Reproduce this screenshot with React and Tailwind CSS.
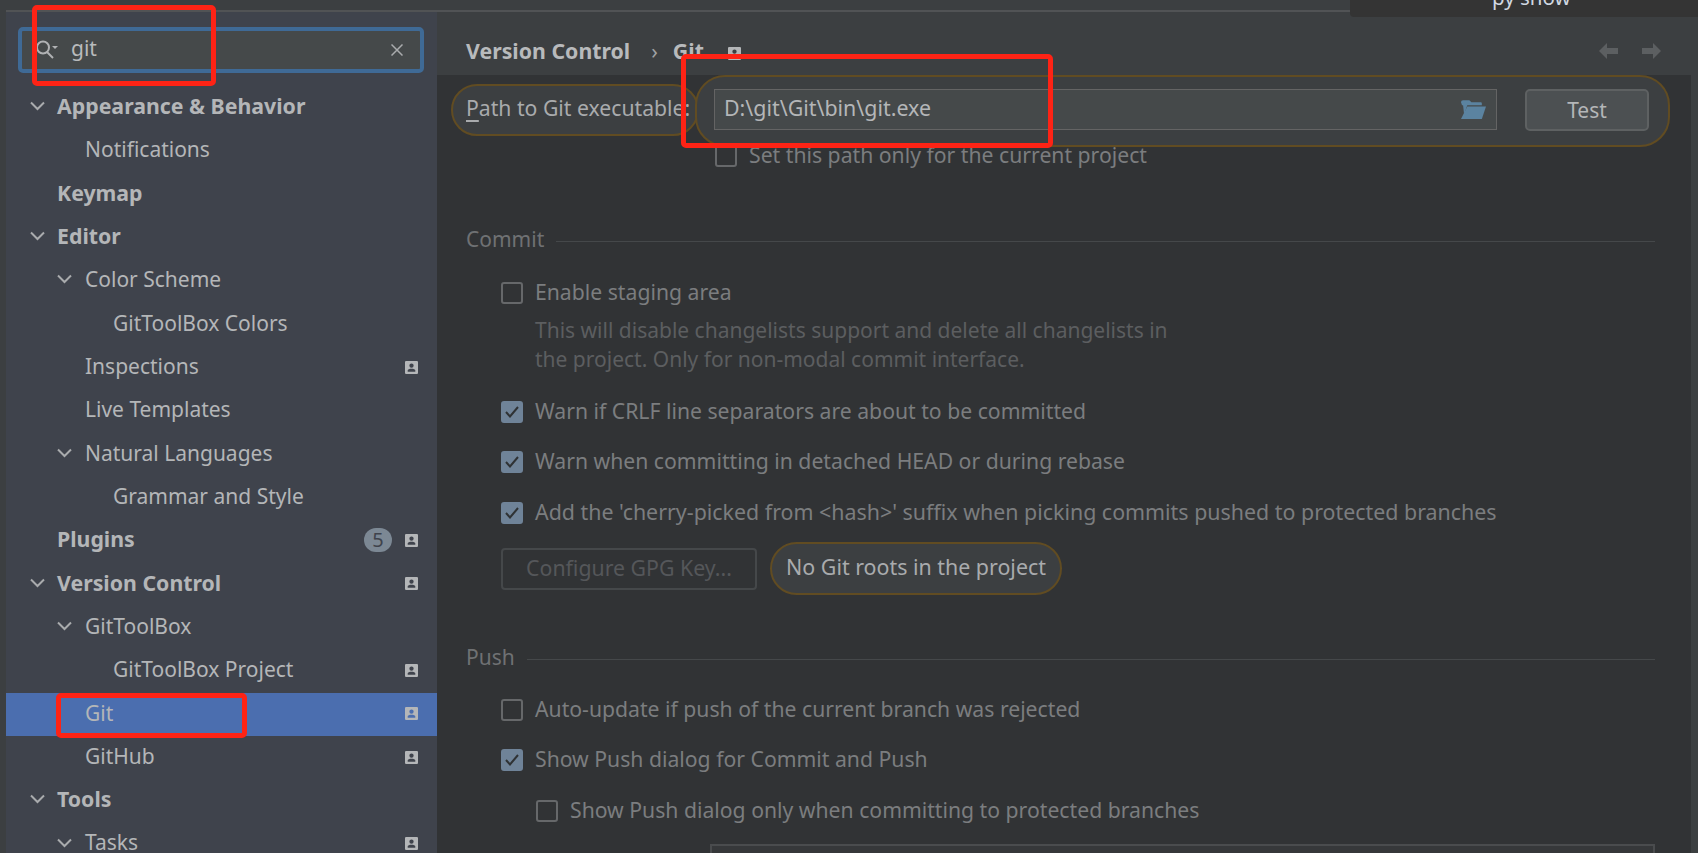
const font = "font-['Noto_Sans','Open_Sans',sans-serif]";

const tree = [
  { label: "Appearance & Behavior", level: 0, open: true, bold: true },
  { label: "Notifications", level: 1 },
  { label: "Keymap", level: 0, bold: true },
  { label: "Editor", level: 0, open: true, bold: true },
  { label: "Color Scheme", level: 1, open: true },
  { label: "GitToolBox Colors", level: 2 },
  { label: "Inspections", level: 1, badge: true },
  { label: "Live Templates", level: 1 },
  { label: "Natural Languages", level: 1, open: true },
  { label: "Grammar and Style", level: 2 },
  { label: "Plugins", level: 0, bold: true, badge: true, count: 5 },
  { label: "Version Control", level: 0, open: true, bold: true, badge: true },
  { label: "GitToolBox", level: 1, open: true },
  { label: "GitToolBox Project", level: 2, badge: true },
  { label: "Git", level: 1, badge: true, selected: true },
  { label: "GitHub", level: 1, badge: true },
  { label: "Tools", level: 0, open: true, bold: true },
  { label: "Tasks", level: 1, open: true, badge: true },
];

function ProjectIcon({ className = "" }) {
  return (
    <svg viewBox="0 0 12 12" className={`w-[13px] h-[13px] ${className}`}>
      <path
        fillRule="evenodd"
        fill="#b4b6b8"
        d="M1 0h10a1 1 0 0 1 1 1v10a1 1 0 0 1-1 1H1a1 1 0 0 1-1-1V1a1 1 0 0 1 1-1zM6 2.2a2 2 0 1 0 0 4 2 2 0 0 0 0-4zM2.5 10h7V8.6c0-.8-1.6-1.4-3.5-1.4s-3.5.6-3.5 1.4z"
      />
    </svg>
  );
}

function Chevron() {
  return (
    <svg viewBox="0 0 15 10" className="w-[15px] h-[10px]" fill="none" stroke="#a9abad" strokeWidth="2">
      <path d="M1 1.5l6.5 6.5L14 1.5" />
    </svg>
  );
}

function TreeRow({ item }) {
  const left = ["pl-[51px]", "pl-[79px]", "pl-[107px]"][item.level];
  const chevronLeft = ["left-[24px]", "left-[51px]", "left-[79px]"][item.level];
  return (
    <div className={`relative h-[43.33px] flex items-center ${left} pr-[19px] ${item.selected ? "bg-[#4b6eaf]" : ""}`}>
      {item.open && (
        <span className={`absolute top-[15px] ${chevronLeft}`}>
          <Chevron />
        </span>
      )}
      <span className={`flex-1 ${item.bold ? "-mt-[3px] text-[21.3px] font-bold text-[#b4b6b8]" : "-mt-[2px] text-[21px] text-[#b4b6b8]"}`}>
        {item.label}
      </span>
      {item.count && (
        <span className="w-[28px] h-[24px] mr-[13px] -mt-[1px] rounded-full bg-[#7c8894] flex items-center justify-center text-[20px] text-[#3f434c]">
          {item.count}
        </span>
      )}
      {item.badge && <ProjectIcon className="-mt-[1px]" />}
    </div>
  );
}

function Sidebar() {
  return (
    <aside className="w-[431px] shrink-0 bg-[#3f434c]">
      <div className="h-[74px] pt-[15px] pl-[12px] pr-[12px]">
        <div className="h-[46px] w-[406px] rounded-[5px] border-[4px] border-[#3f6a96] bg-[#45494a] flex items-center pl-[14px] pr-[17px]">
          <svg viewBox="0 0 24 20" className="w-[24px] h-[20px]" fill="none" stroke="#b0b2b4" strokeWidth="2">
            <circle cx="7" cy="7.5" r="6" />
            <path d="M11 12l6 6" />
            <path d="M16 6h6l-3 3z" fill="#b0b2b4" stroke="none" />
          </svg>
          <span className="ml-[11px] -mt-[2px] flex-1 text-[21px] text-[#b8babc]">git</span>
          <svg viewBox="0 0 12 12" className="w-[12px] h-[12px]" fill="none" stroke="#a9abad" strokeWidth="1.5">
            <path d="M0.5 0.5l11 11M11.5 0.5l-11 11" />
          </svg>
        </div>
      </div>
      {tree.map((item) => (
        <TreeRow key={item.label} item={item} />
      ))}
    </aside>
  );
}

function Check({ checked }) {
  return (
    <span
      className={`w-[22px] h-[22px] shrink-0 rounded-[3px] border-2 flex items-center justify-center ${
        checked ? "bg-[#6f8398] border-[#6f8398]" : "border-[#66686a]"
      }`}
    >
      {checked && (
        <svg viewBox="0 0 14 12" className="w-[14px] h-[12px]" fill="none" stroke="#2f3234" strokeWidth="2">
          <path d="M1 6l4 4.5L13 1" />
        </svg>
      )}
    </span>
  );
}

function CheckRow({ label, checked, className, size = "text-[21.2px]" }) {
  return (
    <div className={`h-[34px] flex items-center gap-[12px] ${size} text-[#7b7d7f] ${className}`}>
      <Check checked={checked} />
      <span className="-mt-[2px] whitespace-nowrap">{label}</span>
    </div>
  );
}

function SectionTitle({ label, className }) {
  return (
    <div className={`h-[34px] flex items-center gap-[12px] pl-[29px] pr-[43px] text-[21px] text-[#6f7173] ${className}`}>
      <span className="-mt-[1px]">{label}</span>
      <span className="flex-1 h-[1px] mt-[3px] bg-[#45484a]" />
    </div>
  );
}

function Main() {
  return (
    <main className="flex-1 min-w-0 bg-[#3c3f41]">
      <div className="h-[63px] pt-[20px] flex items-center pl-[29px] pr-[36px] text-[21.3px] text-[#b8babc]">
        <span className="font-bold -mt-[5px]">Version Control</span>
        <span className="ml-[21px] -mt-[5px] font-normal text-[#a0a2a4]">›</span>
        <span className="ml-[15px] -mt-[5px] font-bold">Git</span>
        <ProjectIcon className="ml-[24px]" />
        <span className="flex-1" />
        <svg viewBox="0 0 62 18" className="w-[62px] h-[18px] -mt-[6px] mr-[1px]" fill="#5c5f61">
          <path d="M0 9l8-8v5h11v6H8v5zM62 9l-8-8v5H43v6h11v5z" />
        </svg>
      </div>

      <div className="h-[778px] bg-[#313335] overflow-hidden">
        <div className="h-[72px] flex items-center">
          <div className="ml-[14px] -mt-[3px] h-[52px] w-[248px] shrink-0 rounded-full border-[2.5px] border-[#614c22] bg-[#3c3f41] flex items-center pl-[13px] text-[21.2px] text-[#a9abad] whitespace-nowrap">
            <span className="-mt-[3px]"><span className="underline underline-offset-4">P</span>ath to Git executable:</span>
          </div>
          <div className="relative -ml-[4px] h-[72px] w-[975px] shrink-0 rounded-[30px] border-[2.5px] border-[#614c22] bg-[#3c3f41] flex items-center pl-[17px]">
            <div className="-mt-[3px] h-[41px] w-[783px] border-[1.5px] border-[#646464] bg-[#45494a] flex items-center pl-[9px] pr-[10px] text-[21.4px] text-[#b4b6b8]">
              <span className="flex-1 -mt-[2px]">D:\git\Git\bin\git.exe</span>
              <svg viewBox="0 0 24 18" className="w-[25px] h-[19px]" fill="#5b83a0">
                <path d="M0 2a2 2 0 0 1 2-2h6l2 2h9a1 1 0 0 1 1 1v2H6L3 14 2 5H1z" />
                <path d="M6 6h18l-4 12H0z" />
              </svg>
            </div>
            <button className="-mt-[3px] ml-[28px] pt-[2px] h-[42px] w-[124px] rounded-[5px] border-2 border-[#5e6162] bg-[#4c5052] text-[21px] text-[#b4b6b8]">
              Test
            </button>
          </div>
        </div>

        <CheckRow label="Set this path only for the current project" className="relative -mt-[8px] ml-[278px]" />
        <SectionTitle label="Commit" className="mt-[50px]" />

        <div className="ml-[64px]">
          <CheckRow label="Enable staging area" className="mt-[19px]" />
          <p className="mt-[6px] ml-[34px] text-[21px] leading-[29px] text-[#5c5e60]">
            This will disable changelists support and delete all changelists in
            <br />
            the project. Only for non-modal commit interface.
          </p>
          <CheckRow checked label="Warn if CRLF line separators are about to be committed" className="mt-[21px]" />
          <CheckRow checked label="Warn when committing in detached HEAD or during rebase" className="mt-[16px]" />
          <CheckRow
            checked
            size="text-[21.4px]"
            label="Add the 'cherry-picked from <hash>' suffix when picking commits pushed to protected branches"
            className="mt-[17px]"
          />
          <div className="mt-[12px] h-[53px] flex items-center">
            <div className="h-[42px] w-[256px] rounded-[4px] border-2 border-[#45484a] flex items-center justify-center text-[21.3px] text-[#55575a]">
              <span className="-mt-[2px]">Configure GPG Key...</span>
            </div>
            <div className="ml-[13px] h-[53px] w-[292px] rounded-full border-[2.5px] border-[#614c22] bg-[#3c3f41] flex items-center justify-center text-[21.4px] text-[#a9abad]">
              <span className="-mt-[2px]">No Git roots in the project</span>
            </div>
          </div>
        </div>

        <SectionTitle label="Push" className="mt-[46px]" />

        <div className="ml-[64px]">
          <CheckRow label="Auto-update if push of the current branch was rejected" className="mt-[18px]" />
          <CheckRow checked label="Show Push dialog for Commit and Push" className="mt-[16px]" />
          <CheckRow label="Show Push dialog only when committing to protected branches" className="mt-[17px] ml-[35px]" />
        </div>
        <div className="mt-[16px] ml-[273px] mr-[43px] h-[30px] border-2 border-[#4a4c4e] bg-[#36383a]" />
      </div>
    </main>
  );
}

export default function App() {
  return (
    <div className={`relative h-[853px] w-full overflow-hidden bg-[#3c3f41] ${font}`}>
      <div className="h-[12px] ml-[6px] border-b-2 border-[#515355]" />
      <div className="flex pl-[6px]">
        <Sidebar />
        <Main />
      </div>

      {/* tooltip cut off by the top of the screenshot */}
      <div className="absolute top-0 right-0 w-[348px] h-[17px] bg-[#343434] rounded-bl-[4px] overflow-hidden">
        <span className="absolute left-[142px] -top-[18px] text-[20.5px] text-[#d0d8e2] whitespace-nowrap">py show</span>
      </div>

      {/* scrollbar track */}
      <div className="absolute top-[75px] right-0 w-[7px] h-[778px] bg-[#3c3f41]" />

      {/* red annotation boxes */}
      <div className="absolute left-[32px] top-[5px] w-[184px] h-[81px] rounded-[5px] border-[5px] border-[#fe2315]" />
      <div className="absolute left-[681px] top-[54px] w-[372px] h-[94px] rounded-[5px] border-[5px] border-[#fe2315]" />
      <div className="absolute left-[56px] top-[693px] w-[191px] h-[45px] rounded-[5px] border-[5px] border-[#fe2315]" />
    </div>
  );
}
